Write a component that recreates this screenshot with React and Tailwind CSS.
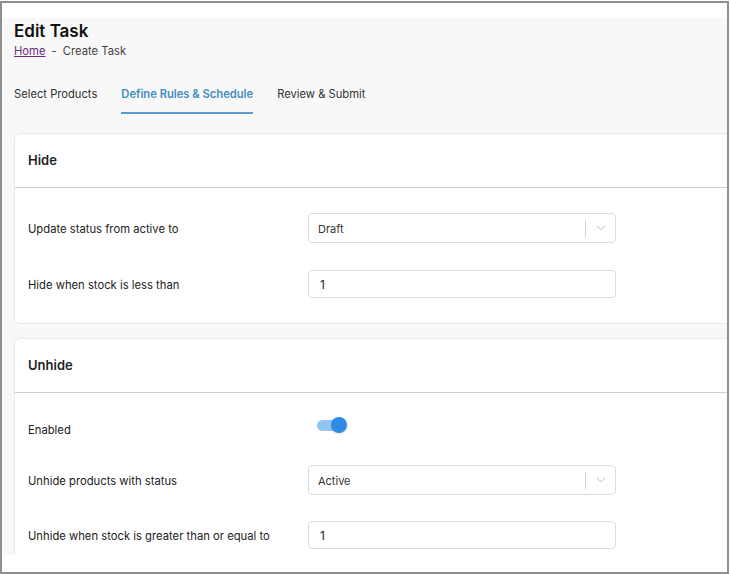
import React, { useState } from "react";

function SelectBox({ value }) {
    return (
        <div className="w-[308px] h-[30px] border border-[#dcdcdc] rounded-[4px] bg-white flex items-center">
            <span className="flex-1 pl-[9px] pt-[2px] text-[11px] text-[#333]">{value}</span>
            <span className="w-px h-[17px] bg-[#d4d4d4]" />
            <span className="w-[29px] flex items-center justify-center">
                <svg viewBox="0 0 20 20" className="w-[12px] h-[12px]" aria-hidden="true">
                    <path d="M4 7l6 6 6-6" fill="none" stroke="#b8b8b8" strokeWidth="1.6" strokeLinecap="round" strokeLinejoin="round" />
                </svg>
            </span>
        </div>
    );
}

function NumberBox({ value }) {
    return (
        <div className="w-[308px] h-[28px] border border-[#dcdcdc] rounded-[4px] bg-white flex items-center pl-[11px] pt-[2px] text-[12px] text-[#222]">
            {value}
        </div>
    );
}

function Row({ label, children, className = "" }) {
    return (
        <div className={`flex items-center ${className}`}>
            <div className="w-[280px] shrink-0 pt-[3px] text-[11.25px] text-[#222]">{label}</div>
            {children}
        </div>
    );
}

function Card({ title, children, bodyClass }) {
    return (
        <div className="w-[760px] bg-white border border-[#e9e9e9] rounded-[6px]">
            <div className="h-[54px] flex items-center px-[13px] border-b border-[#cfcfcf]">
                <span className="text-[13px] font-semibold text-[#1f1f1f]">{title}</span>
            </div>
            <div className={`px-[13px] flex flex-col ${bodyClass}`}>{children}</div>
        </div>
    );
}

export default function App() {
    const [enabled, setEnabled] = useState(true);

    const tabs = ["Select Products", "Define Rules & Schedule", "Review & Submit"];

    return (
        <div className="w-[730px] h-[574px] bg-white" style={{ fontFamily: "Inter, 'Noto Sans', sans-serif" }}>
            <div className="mt-px w-[729px] h-[573px] border-2 border-[#8f8f8f] bg-white flex flex-col overflow-hidden">
                <div className="h-[15px] bg-white shrink-0" />
                <div className="h-[537px] bg-[#f8f8f8] overflow-hidden pl-[12px]">
                    {/* Page header */}
                    <h1 className="mt-[3px] text-[17px] leading-[20px] font-semibold text-[#111]">Edit Task</h1>
                    <div className="mt-[2px] text-[11.25px] leading-[16px] text-[#444] flex items-center gap-[6px]">
                        <a href="#" className="text-[#6e2a83] underline">Home</a>
                        <span>-</span>
                        <span>Create Task</span>
                    </div>

                    {/* Tabs */}
                    <div className="mt-[27px] flex items-start gap-[24px] text-[11.2px] leading-[16px]">
                        {tabs.map((t, i) => (
                            <div key={t} className="flex flex-col">
                                <span className={i === 1 ? "text-[#3f8fc2] font-semibold" : "text-[#333]"}>{t}</span>
                                <span className={`mt-[10px] h-[2px] ${i === 1 ? "bg-[#5b9bc9]" : "bg-transparent"}`} />
                            </div>
                        ))}
                    </div>

                    {/* Hide */}
                    <div className="mt-[19px]">
                        <Card title="Hide" bodyClass="pt-[25px] pb-[25px] gap-[27px]">
                            <Row label="Update status from active to">
                                <SelectBox value="Draft" />
                            </Row>
                            <Row label="Hide when stock is less than">
                                <NumberBox value="1" />
                            </Row>
                        </Card>
                    </div>

                    {/* Unhide */}
                    <div className="mt-[14px]">
                        <Card title="Unhide" bodyClass="pt-[21px] pb-[26px]">
                            <Row label="Enabled" className="h-[30px]">
                                <button
                                    onClick={() => setEnabled(!enabled)}
                                    className="ml-[9px] -mt-[8px] relative w-[30px] h-[18px] flex items-center"
                                    aria-label="Toggle enabled"
                                >
                                    <span className={`absolute left-0 right-[2px] h-[11px] rounded-full ${enabled ? "bg-[#93c4f2]" : "bg-[#d5d5d5]"}`} />
                                    <span className={`absolute top-px w-[16px] h-[16px] rounded-full shadow-sm ${enabled ? "right-0 bg-[#2f8ae6]" : "left-0 bg-white border border-[#ccc]"}`} />
                                </button>
                            </Row>
                            <Row label="Unhide products with status" className="mt-[21px]">
                                <SelectBox value="Active" />
                            </Row>
                            <Row label="Unhide when stock is greater than or equal to" className="mt-[26px]">
                                <NumberBox value="1" />
                            </Row>
                        </Card>
                    </div>
                </div>
            </div>
        </div>
    );
}
